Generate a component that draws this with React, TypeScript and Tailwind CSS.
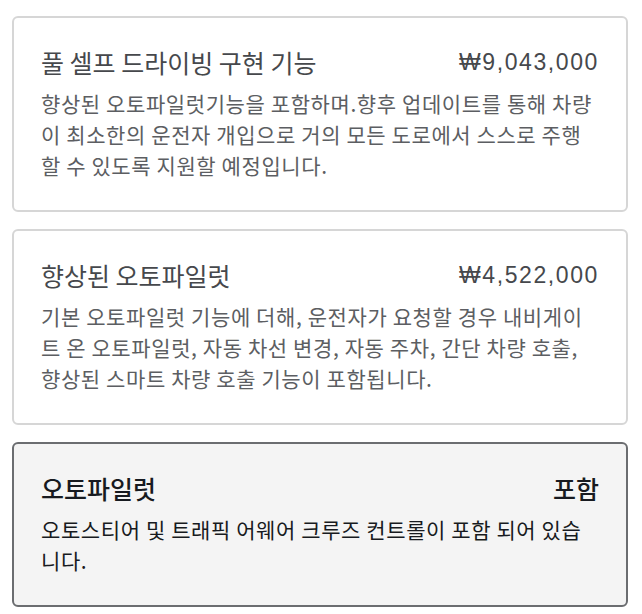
import React from "react";

type Option = {
  title: string;
  price: string;
  description: string;
  selected?: boolean;
};

const options: Option[] = [
  {
    title: "풀 셀프 드라이빙 구현 기능",
    price: "₩9,043,000",
    description:
      "향상된 오토파일럿기능을 포함하며.향후 업데이트를 통해 차량이 최소한의 운전자 개입으로 거의 모든 도로에서 스스로 주행할 수 있도록 지원할 예정입니다.",
  },
  {
    title: "향상된 오토파일럿",
    price: "₩4,522,000",
    description:
      "기본 오토파일럿 기능에 더해, 운전자가 요청할 경우 내비게이트 온 오토파일럿, 자동 차선 변경, 자동 주차, 간단 차량 호출, 향상된 스마트 차량 호출 기능이 포함됩니다.",
  },
  {
    title: "오토파일럿",
    price: "포함",
    description: "오토스티어 및 트래픽 어웨어 크루즈 컨트롤이 포함 되어 있습니다.",
    selected: true,
  },
];

const OptionCard: React.FC<{ option: Option }> = ({ option }) => {
  const box = option.selected
    ? "border-[#6b6d70] bg-[#f4f4f4]"
    : "border-[#d6d6d6] bg-white";
  const titleColor = option.selected ? "text-[#171a20] font-medium" : "text-[#46484c]";
  const bodyColor = option.selected ? "text-[#171a20]" : "text-[#5c5e62]";
  const priceFont = option.selected
    ? "text-[25px]"
    : "font-['Liberation_Sans','Noto_Sans_CJK_KR',sans-serif] text-[23px] tracking-[1.6px]";

  return (
    <div className={`rounded-[6px] border-2 px-[27px] pt-[29px] pb-[29px] ${box}`}>
      <div className={`flex items-center justify-between text-[25px] leading-[30px] ${titleColor}`}>
        <span>{option.title}</span>
        <span className={priceFont}>{option.price}</span>
      </div>
      <p className={`mt-[11px] text-[21px] leading-[31px] tracking-[0.6px] ${bodyColor}`}>
        {option.description}
      </p>
    </div>
  );
};

export default function App() {
  return (
    <div className="min-h-screen bg-white px-[12px] pt-[16px] font-['Noto_Sans_CJK_KR',sans-serif]">
      <div className="flex w-[616px] flex-col gap-[17px]">
        {options.map((o) => (
          <OptionCard key={o.title} option={o} />
        ))}
      </div>
    </div>
  );
}
